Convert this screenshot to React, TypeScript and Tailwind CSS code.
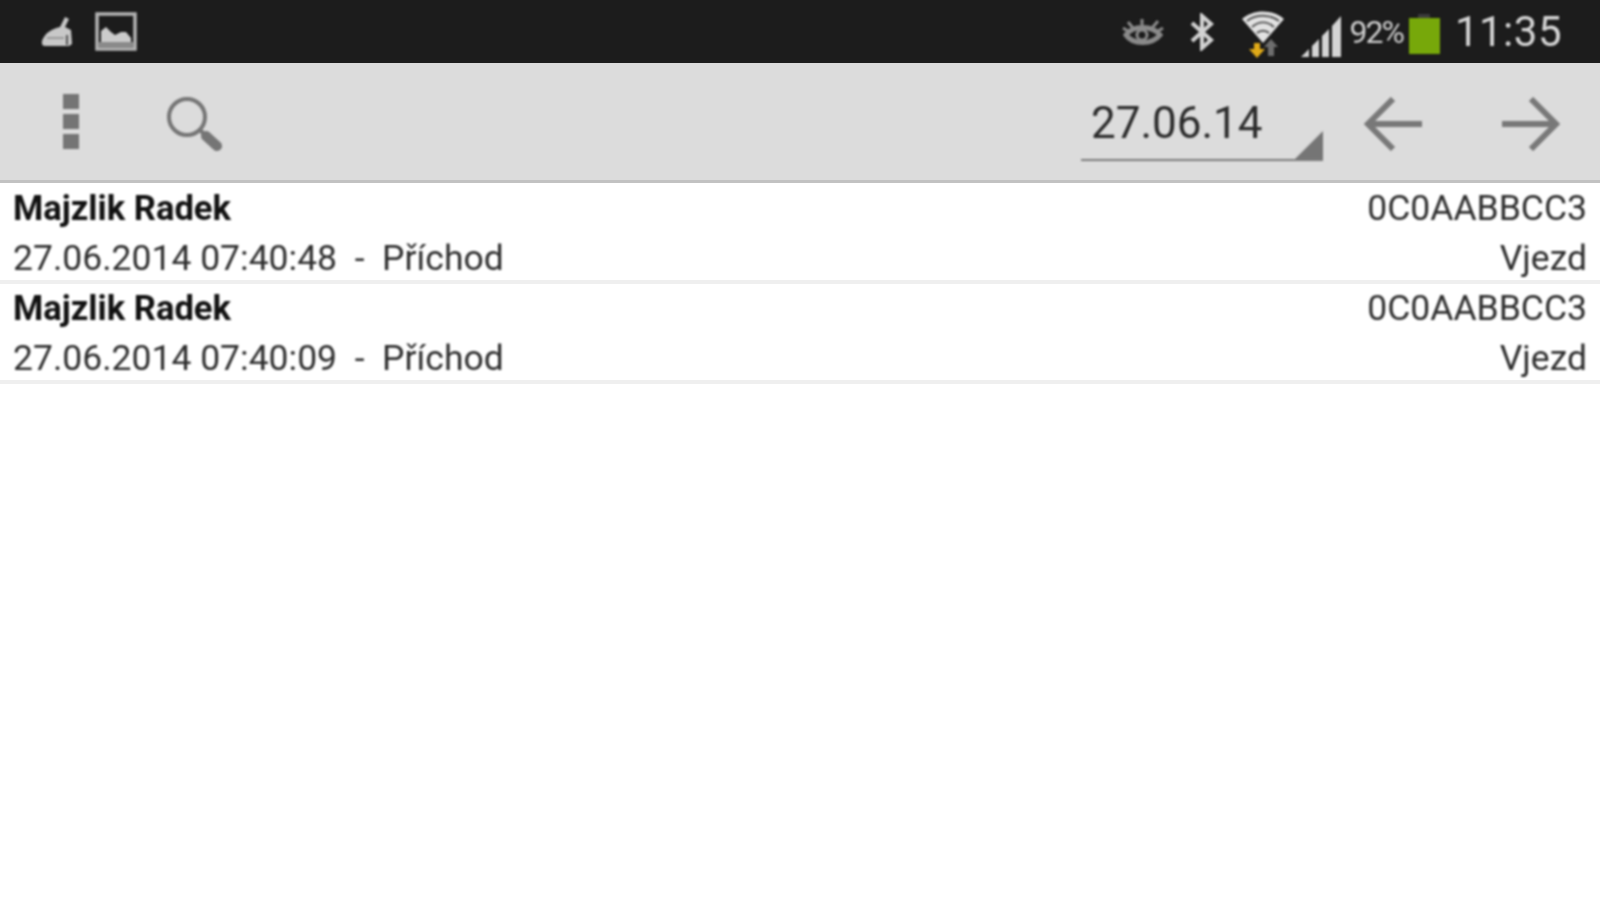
const rows = [
    { time: '27.06.2014 07:40:48' },
    { time: '27.06.2014 07:40:09' },
];

function BroomIcon() {
    return (
        <svg width="36" height="36" viewBox="0 0 36 36" fill="#c8c8c8">
            <path d="M25 3 L29 5 L25 13 L31 16 L32 30 L29 32 L5 32 C1 32 1 27 4 23 C7 18 12 15 20 13 Z" />
            <path d="M7 24 L24 24" stroke="#8a8a8a" strokeWidth="1.5" />
            <path d="M27 21 V31" stroke="#2a2a2a" strokeWidth="1.5" />
        </svg>
    );
}

function PictureIcon() {
    return (
        <svg width="42" height="40" viewBox="0 0 42 40">
            <rect x="2" y="2" width="38" height="35" fill="#1c1c1c" stroke="#b4b4b4" strokeWidth="3.5" />
            <path d="M6 32 V19 L11 15 L16 20 L20 23 L26 20 L31 20 L36 26 V32 Z" fill="#cccccc" />
            <rect x="4" y="30" width="34" height="6" fill="#8a8a8a" />
        </svg>
    );
}

function EyeIcon() {
    return (
        <svg width="42" height="32" viewBox="0 0 42 32" fill="none" stroke="#8a8a8a">
            <path d="M4 19 C11 9 30 9 38 19 C30 29 11 29 4 19 Z" strokeWidth="5" />
            <circle cx="20" cy="19" r="5" strokeWidth="3" />
            <path d="M6 6 L11 12 M20 3 V9 M36 5 L30 12 M1 12 L6 15 M41 12 L36 15" strokeWidth="3" />
        </svg>
    );
}

function BluetoothIcon() {
    return (
        <svg width="26" height="38" viewBox="0 0 26 38" fill="none" stroke="#d2d2d2" strokeWidth="4">
            <path d="M3 10 L22 27 L13 35 V3 L22 11 L3 28" />
        </svg>
    );
}

function WifiIcon() {
    return (
        <svg width="46" height="50" viewBox="0 0 46 50" fill="none">
            <path d="M2 11 C13 1 33 1 44 11 L23 35 Z" fill="#e2e2e2" />
            <path d="M7 13 C16 6 30 6 39 13 M12 19 C19 13 27 13 34 19 M17 25 C20 22 26 22 29 25" stroke="#555555" strokeWidth="2" />
            <path d="M14 35 H20 V41 H25 L17 50 L9 41 H14 Z" fill="#e0aa18" />
            <path d="M31 31 L38 39 H34 V48 H28 V39 H24 Z" fill="#6e6e6e" />
        </svg>
    );
}

function SignalIcon() {
    return (
        <svg width="42" height="44" viewBox="0 0 42 44" fill="#d4d4d4">
            <path d="M1 43 L9 35 V43 Z" />
            <path d="M12 32 L19 25 V43 H12 Z" />
            <path d="M22 22 L29 15 V43 H22 Z" />
            <path d="M32 12 L41 2 V43 H32 Z" />
        </svg>
    );
}

function SearchIcon() {
    return (
        <svg width="58" height="56" viewBox="0 0 58 56" fill="none" stroke="#757575">
            <circle cx="21" cy="21" r="18" strokeWidth="4" />
            <path d="M34 34 L39 39" strokeWidth="4" />
            <path d="M40 40 L51 50" strokeWidth="10" strokeLinecap="round" />
        </svg>
    );
}

function ArrowIcon({ flip }: { flip?: boolean }) {
    return (
        <svg width="58" height="54" viewBox="0 0 58 54" fill="none" stroke="#787878" strokeWidth="6" className={flip ? 'rotate-180' : ''}>
            <path d="M29 2 L4 27 L29 52 M4 27 H58" />
        </svg>
    );
}

export default function App() {
    return (
        <div className="h-[900px] w-[1600px] overflow-hidden bg-white font-['Roboto',sans-serif]">
            {/* Status bar */}
            <div className="flex h-[63px] items-center justify-between bg-[#1c1c1c] pl-[40px] pr-[38px]">
                <div className="flex items-center gap-[19px] blur-[0.8px]">
                    <BroomIcon />
                    <PictureIcon />
                </div>
                <div className="flex items-center blur-[0.8px]">
                    <div className="mr-[25px]"><EyeIcon /></div>
                    <div className="mr-[25px]"><BluetoothIcon /></div>
                    <div className="mr-[14px] mt-[2px]"><WifiIcon /></div>
                    <div className="mt-[8px]"><SignalIcon /></div>
                    <span className="ml-[8px] text-[32px] tracking-[-2px] text-[#cfcfcf]">92%</span>
                    <div className="ml-[6px] mr-[15px] mt-[4px] flex flex-col items-center">
                        <div className="h-[4px] w-[12px] bg-[#3c3c3c]" />
                        <div className="h-[36px] w-[31px] bg-[#77a80a]" />
                    </div>
                    <span className="text-[42px] leading-none tracking-[0.5px] text-[#d6d6d6]">11:35</span>
                </div>
            </div>

            {/* Toolbar */}
            <div className="flex h-[120px] items-center justify-between border-b-[3px] border-[#c2c2c2] bg-[#dcdcdc] pl-[63px] pr-[40px]">
                <div className="flex items-center blur-[0.8px]">
                    <div className="flex flex-col gap-[5px]">
                        <div className="h-[15px] w-[16px] bg-[#757575]" />
                        <div className="h-[15px] w-[16px] bg-[#757575]" />
                        <div className="h-[15px] w-[16px] bg-[#757575]" />
                    </div>
                    <div className="ml-[87px] mt-[4px]"><SearchIcon /></div>
                </div>
                <div className="flex items-center blur-[0.8px]">
                    <div className="relative mt-[7px] h-[72px] w-[242px] border-b-2 border-[#7c7c7c]">
                        <span className="absolute left-[10px] top-[12px] text-[44px] leading-none text-[#2b2b2b]">27.06.14</span>
                        <div className="absolute bottom-0 right-0 h-0 w-0 border-b-[28px] border-l-[28px] border-b-[#757575] border-l-transparent" />
                    </div>
                    <div className="ml-[41px] mt-[4px]"><ArrowIcon /></div>
                    <div className="ml-[80px] mt-[4px]"><ArrowIcon flip /></div>
                </div>
            </div>

            {/* Records */}
            <div className="pt-[1px]">
                {rows.map((row) => (
                    <div key={row.time} className="h-[100px] border-b-[4px] border-[#efefef] px-[13px] text-[35.5px] leading-[49px]">
                        <div className="flex justify-between blur-[0.8px]">
                            <div>
                                <div className="text-[34.6px] font-bold text-[#111111]">Majzlik Radek</div>
                                <div className="mt-[1px] whitespace-pre text-[#2e2e2e]">{row.time}  -  Příchod</div>
                            </div>
                            <div className="text-right text-[#2e2e2e]">
                                <div>0C0AABBCC3</div>
                                <div className="mt-[1px]">Vjezd</div>
                            </div>
                        </div>
                    </div>
                ))}
            </div>
        </div>
    );
}
